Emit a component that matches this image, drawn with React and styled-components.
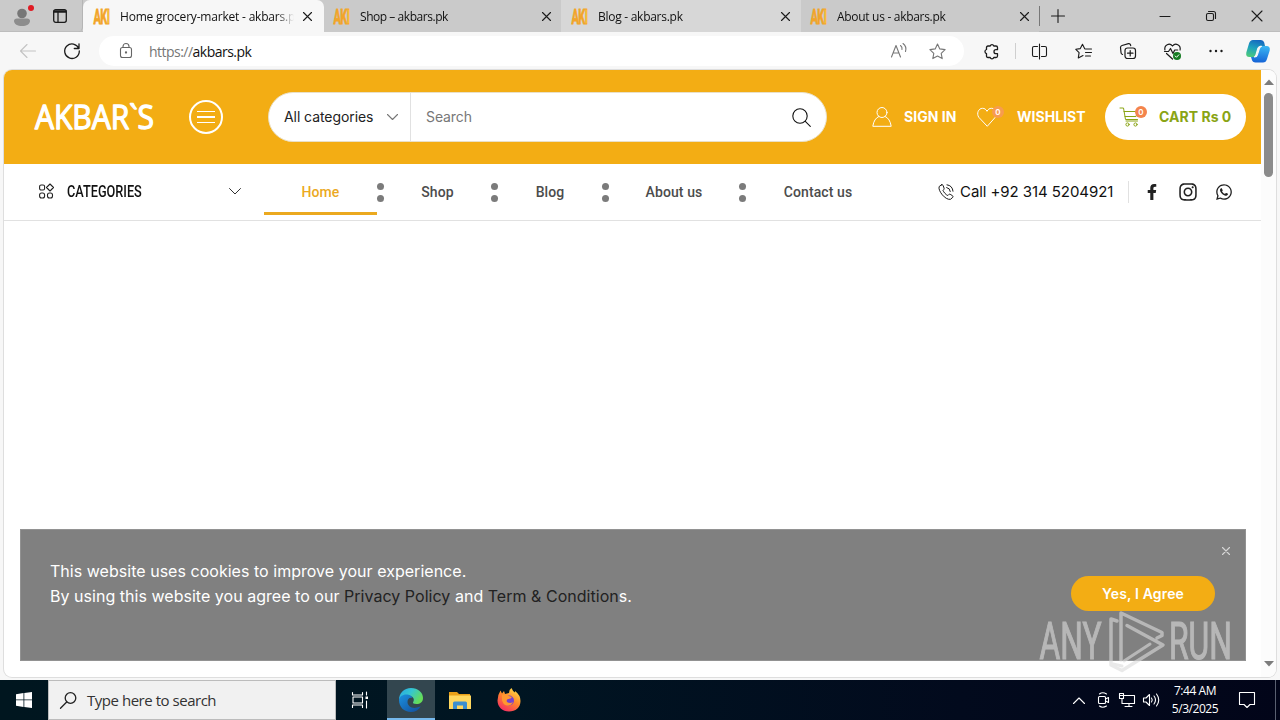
import styled, { createGlobalStyle } from "styled-components";
import { FaFacebookF, FaInstagram, FaWhatsapp } from "react-icons/fa";

const GlobalStyle = createGlobalStyle`
  * {
    box-sizing: border-box;
  }

  body {
    margin: 0;
    overflow: hidden;
    font-family: "Inter", sans-serif;
  }
`;

const Desktop = styled.div`
  position: relative;
  display: flex;
  flex-direction: column;
  width: 1280px;
  height: 720px;
  background: #f7f7f7;
`;

const Icon = styled.svg`
  display: block;
  flex: none;
  width: ${(p) => p.$w || 16}px;
  height: ${(p) => p.$h || p.$w || 16}px;
  margin-left: ${(p) => p.$ml || 0}px;
  fill: none;
  stroke: ${(p) => p.$color || "#1b1b1b"};
  stroke-width: ${(p) => p.$sw || 1.1};
  stroke-linecap: round;
  stroke-linejoin: round;
  overflow: visible;
`;

/* browser tabs */

const TabStrip = styled.div`
  display: flex;
  flex: none;
  height: 32px;
  background: #cacaca;
  box-shadow: inset 0 -1px 0 #bdbdbd;
`;

const TabActions = styled.div`
  display: flex;
  align-items: center;
  width: 83px;
  border-right: 1px solid #b5b5b5;
  border-radius: 0 0 5px 0;
`;

const Tab = styled.div`
  display: flex;
  align-items: center;
  width: ${(p) => p.$width}px;
  padding: 0 ${(p) => p.$end || 10}px 0 ${(p) => p.$pad}px;
  border-radius: ${(p) => (p.$active ? "7px 7px 0 0" : "0")};
  background: ${(p) => p.$bg};
`;

const Favicon = styled.svg`
  display: block;
  flex: none;
  width: 18px;
  height: 18px;
  overflow: visible;
`;

const TabTitle = styled.div`
  width: 174px;
  margin-left: 9px;
  overflow: hidden;
  white-space: nowrap;
  font: 12px "Open Sans", sans-serif;
  letter-spacing: ${(p) => p.$ls || 0}px;
  color: #111;
  mask-image: linear-gradient(to right, #000 90%, transparent);
`;

const TabClose = styled(Icon)`
  margin-left: auto;
`;

const WindowButtons = styled.div`
  display: flex;
  align-items: center;
  flex: 1;
`;

const TabDivider = styled.div`
  width: 1px;
  height: 20px;
  background: #777;
`;

/* address bar */

const Toolbar = styled.div`
  display: flex;
  align-items: center;
  flex: none;
  height: 38px;
  background: #f7f7f7;
`;

const AddressBar = styled.div`
  display: flex;
  align-items: center;
  width: 865px;
  height: 30px;
  margin-left: 19px;
  border-radius: 15px;
  background: #fff;
`;

const Url = styled.div`
  width: 119px;
  margin-left: 17px;
  font: 14px "Open Sans", sans-serif;
  letter-spacing: -0.52px;
  white-space: nowrap;
  color: #111;

  span {
    color: #767676;
  }
`;

const ToolDivider = styled.div`
  width: 1px;
  height: 16px;
  margin-left: 16px;
  background: #cfcfcf;
`;

/* page */

const Viewport = styled.div`
  display: flex;
  flex: none;
  width: 1272px;
  height: 607px;
  margin-left: 4px;
  border-radius: 8px;
  overflow: hidden;
  background: #fff;
  box-shadow: 0 0 0 1px #dedede;
`;

const Page = styled.div`
  display: flex;
  flex-direction: column;
  width: 1257px;
`;

const Scrollbar = styled.div`
  display: flex;
  flex-direction: column;
  align-items: center;
  width: 15px;
  padding: 9px 0 10px;
  background: #fcfcfc;
`;

const Thumb = styled.div`
  width: 9px;
  height: 84px;
  margin: 8px 0 auto;
  border-radius: 5px;
  background: #8b8b8b;
`;

const Header = styled.header`
  display: flex;
  align-items: center;
  flex: none;
  height: 94px;
  padding-left: 30px;
  background: #f3ad14;
`;

const MenuButton = styled.button`
  display: flex;
  flex-direction: column;
  align-items: center;
  justify-content: center;
  gap: 4px;
  width: 34px;
  height: 34px;
  margin-left: 34px;
  padding: 0;
  border: 2px solid #fff;
  border-radius: 50%;
  background: none;

  span {
    width: 18px;
    height: 1.4px;
    background: #fff;
  }
`;

const SearchBox = styled.div`
  display: flex;
  align-items: center;
  width: 559px;
  height: 50px;
  margin-left: 45px;
  border: 1px solid #e9e0c8;
  border-radius: 25px;
  background: #fff;
`;

const CategorySelect = styled.div`
  display: flex;
  align-items: center;
  justify-content: space-between;
  width: 142px;
  height: 48px;
  padding: 0 12px 1px 15px;
  border-right: 1px solid #e1e1e1;
  font-size: 14px;
  letter-spacing: -0.07px;
  color: #222;
  white-space: nowrap;
`;

const SearchField = styled.div`
  width: 367px;
  padding: 0 0 1px 15px;
  font-size: 14px;
  letter-spacing: -0.1px;
  color: #777;
`;

const HeaderLink = styled.div`
  display: flex;
  align-items: center;
  flex: none;
  width: ${(p) => p.$width}px;
  height: 46px;
  margin-left: ${(p) => p.$ml || 0}px;
  padding-bottom: 1px;
  font-size: 14px;
  font-weight: 700;
  letter-spacing: 0.03px;
  color: #fff;
  white-space: nowrap;
`;

const IconBox = styled.div`
  position: relative;
  flex: none;
  width: ${(p) => p.$width}px;
`;

const Badge = styled.span`
  position: absolute;
  top: -1px;
  left: 15px;
  width: 12px;
  height: 12px;
  border-radius: 50%;
  background: ${(p) => p.$bg};
  font-size: 8px;
  font-weight: 600;
  line-height: 12px;
  text-align: center;
  color: #fff;
`;

const CartButton = styled(HeaderLink)`
  padding-left: 15px;
  border-radius: 23px;
  background: #fff;
  color: #8aa414;
`;

const NavBar = styled.nav`
  display: flex;
  align-items: center;
  flex: none;
  height: 57px;
  border-bottom: 1px solid #e1e1e1;
  font-family: "Roboto", sans-serif;
`;

const Categories = styled.div`
  display: flex;
  align-items: center;
  width: 260px;
  padding: 0 23px 1px 35px;
  color: #111;
`;

const CategoriesLabel = styled.div`
  width: 162px;
  margin-left: 13px;
  font-size: 16px;
  font-weight: 500;
  transform: scaleX(0.795);
  transform-origin: left;
`;

const NavItem = styled.div`
  display: flex;
  align-items: center;
  justify-content: center;
  width: ${(p) => p.$width}px;
  height: 46px;
  margin-top: -1px;
  border-top: 3px solid transparent;
  border-bottom: 3px solid ${(p) => (p.$active ? "#eba91f" : "transparent")};
  font-size: 14px;
  font-weight: 500;
  letter-spacing: 0.1px;
  white-space: nowrap;
  color: ${(p) => (p.$active ? "#eba91f" : "#4c4c4c")};
`;

const Dots = styled.div`
  display: flex;
  flex-direction: column;
  gap: 5px;
  width: 7px;

  &::before,
  &::after {
    content: "";
    width: 7px;
    height: 7px;
    border-radius: 50%;
    background: #7b7b7b;
  }
`;

const Phone = styled.div`
  display: flex;
  align-items: center;
  width: 191px;
  height: 22px;
  margin-left: 48px;
  padding-bottom: 1px;
  border-right: 1px solid #e1e1e1;
  font: 15px "Inter", sans-serif;
  letter-spacing: -0.07px;
  white-space: nowrap;
  color: #111;

  span {
    margin-left: 6px;
  }
`;

const Socials = styled.div`
  display: flex;
  align-items: center;
  margin-left: 14px;
  color: #222;

  svg {
    width: 18px;
    margin-right: 18px;
  }
`;

const CookieBar = styled.div`
  display: flex;
  flex: none;
  width: 1226px;
  height: 132px;
  margin: auto 0 16px 16px;
  padding: 29px 15px 0 29px;
  border: 1px solid #929292;
  background: #808080;
  color: #fff;
`;

const CookieText = styled.p`
  width: 1021px;
  margin: 0;
  font-size: 16px;
  line-height: 25px;
  letter-spacing: 0.03px;

  a {
    color: #222;
  }
`;

const CookieActions = styled.div`
  display: flex;
  flex-direction: column;
  width: 159px;
  margin-top: -12px;
`;

const CookieClose = styled(Icon)`
  align-self: flex-end;
`;

const AgreeButton = styled.button`
  width: 144px;
  height: 35px;
  margin-top: 21px;
  padding: 0 0 1px;
  border: 0;
  border-radius: 18px;
  background: #f3ad14;
  font: 600 14px "Inter", sans-serif;
  letter-spacing: 0.15px;
  color: #fff;
`;

const Watermark = styled.svg`
  position: absolute;
  left: 1036px;
  top: 608px;
  width: 200px;
  height: 68px;
  opacity: 0.6;
`;

/* taskbar */

const Taskbar = styled.div`
  display: flex;
  align-items: center;
  flex: none;
  height: 40px;
  margin-top: 3px;
  background: linear-gradient(to right, #00161f, #001522 40%, #020a1d 75%, #020519);
`;

const TaskSearch = styled.div`
  display: flex;
  align-items: center;
  width: 288px;
  height: 40px;
  padding-left: 11px;
  border: 1px solid #bcbcbc;
  background: #f1f1f1;
  font: 15px "Open Sans", sans-serif;
  letter-spacing: -0.47px;
  color: #333;

  span {
    margin-left: 10px;
  }
`;

const TaskButton = styled.div`
  display: flex;
  align-items: center;
  justify-content: center;
  width: ${(p) => p.$width || 49}px;
  height: 40px;
  background: ${(p) => (p.$active ? "#33464f" : "none")};
  box-shadow: ${(p) => (p.$active ? "inset 0 -2px 0 #76b9ed" : "none")};
`;

const Tray = styled.div`
  display: flex;
  align-items: center;
  width: 208px;
  height: 40px;
  margin-left: auto;
  border-right: 1px solid #5a6070;
  margin-right: 4px;
`;

const Clock = styled.div`
  width: 60px;
  margin-left: 5px;
  font: 12px/18px "Open Sans", sans-serif;
  letter-spacing: -0.45px;
  text-align: center;
  white-space: nowrap;
  color: #fff;
`;

const tabs = [
  { title: "Home grocery-market - akbars.pk", width: 241, pad: 10, end: 12, bg: "#f7f7f7", active: true, ls: -0.2 },
  { title: "Shop – akbars.pk", width: 237, pad: 9, bg: "#cacaca", ls: -0.45 },
  { title: "Blog - akbars.pk", width: 240, pad: 10, end: 11, bg: "#d7d7d7", ls: -0.27 },
  { title: "About us - akbars.pk", width: 238, pad: 9, bg: "#cacaca", ls: -0.3 },
];

const navItems = [
  { label: "Home", width: 113, active: true },
  { label: "Shop", width: 107 },
  { label: "Blog", width: 104 },
  { label: "About us", width: 130 },
  { label: "Contact us", width: 144 },
];

function AkbarsFavicon() {
  return (
    <Favicon viewBox="0 0 18 18">
      <g transform="translate(0.5 16.5) scale(0.53 1)" fontFamily="Roboto" fontSize="21" fontWeight="700">
        <text letterSpacing="-1.2" fill="#f2a52a" stroke="#f2a52a" strokeWidth=".8">
          AK<tspan fill="#f6c42e">I</tspan>
        </text>
      </g>
    </Favicon>
  );
}

function BrowserTabs() {
  return (
    <TabStrip>
      <TabActions>
        <Icon $w={24} $ml={10} viewBox="0 0 24 24">
          <circle cx="12" cy="9.500" r="4.800" fill="#777" stroke="none" />
          <path d="M4 17q0-2.500 3-2.500h10q3 0 3 2.500c0 3-3.500 5-8 5s-8-2-8-5z" fill="#8d8d8d" stroke="none" />
          <circle cx="21" cy="4" r="3" fill="#e01b24" stroke="none" />
        </Icon>
        <Icon $w={14} $ml={19} $sw={1.3} viewBox="0 0 14 14">
          <rect x=".7" y=".7" width="12.600" height="12.600" rx="2" />
          <path d="M.7 3h12.600M1 2h12M5 3v10" />
        </Icon>
      </TabActions>
      {tabs.map((tab) => (
        <Tab key={tab.title} $width={tab.width} $pad={tab.pad} $end={tab.end} $bg={tab.bg} $active={tab.active}>
          <AkbarsFavicon />
          <TabTitle $ls={tab.ls}>{tab.title}</TabTitle>
          <TabClose $w={9} viewBox="0 0 9 9">
            <path d="M.5.5l8 8M8.500.5l-8 8" />
          </TabClose>
        </Tab>
      ))}
      <WindowButtons>
        <TabDivider />
        <Icon $w={14} $ml={11} viewBox="0 0 14 14">
          <path d="M7 .5v13M.5 7h13" />
        </Icon>
        <Icon $w={10} $ml={95} viewBox="0 0 10 10">
          <path d="M0 5.500h10" />
        </Icon>
        <Icon $w={10} $ml={36} viewBox="0 0 10 10">
          <rect x=".5" y="2.500" width="7" height="7" rx="1.500" />
          <path d="M2.500.5h5q2 0 2 2v5" />
        </Icon>
        <Icon $w={10} $ml={36} viewBox="0 0 10 10">
          <path d="M0 0l10 10M10 0L0 10" />
        </Icon>
      </WindowButtons>
    </TabStrip>
  );
}

function AddressToolbar() {
  return (
    <Toolbar>
      <Icon $w={16} $ml={20} $color="#c3c3c3" viewBox="0 0 16 16">
        <path d="M15.500 8H.8M7 1.500L.5 8 7 14.500" />
      </Icon>
      <Icon $w={16} $ml={28} $sw={1.3} viewBox="0 0 16 16">
        <path d="M14.800 5.500A7.300 7.300 0 1 0 15.300 8M15 .8v4.700h-4.700" />
      </Icon>
      <AddressBar>
        <Icon $w={12} $h={16} $ml={21} $color="#666" viewBox="0 0 12 16">
          <rect x=".5" y="4.500" width="11" height="10" rx="2" />
          <path d="M3 4.500V3.500a3 3 0 0 1 6 0v1" />
          <circle cx="6" cy="9.500" r=".6" fill="#666" />
        </Icon>
        <Url>
          <span>https://</span>akbars.pk
        </Url>
        <Icon $w={16} $ml={623} $color="#777" viewBox="0 0 16 16">
          <path d="M.5 14L5 2.500 9.500 14M2 10h6M9.500 2.500q2 1.500 1.500 4M12 .5q4 3 2.500 8" />
        </Icon>
        <Icon $w={17} $ml={22} $color="#777" viewBox="0 0 17 17">
          <path d="M8.500 1l2.300 4.900 5.300.7-3.900 3.700 1 5.300-4.700-2.600-4.700 2.600 1-5.300L.9 6.600l5.300-.7z" />
        </Icon>
      </AddressBar>
      <Icon $w={15} $ml={20} $sw={1.3} viewBox="0 0 15 15">
        <path d="M4 2h2.200a1.900 1.900 0 0 1 3.600 0H12q1.500 0 1.500 1.500v2.200H12a2 2 0 0 0 0 4h1.500v2.300q0 1.500-1.500 1.500H9.800a1.900 1.900 0 0 1-3.600 0H4Q2.500 13.500 2.500 12V9.700a2.200 2.200 0 0 1 0-4.200v-2Q2.500 2 4 2z" />
      </Icon>
      <ToolDivider />
      <Icon $w={15} $ml={16} viewBox="0 0 15 15">
        <path d="M5.500 2.500H2q-1.500 0-1.500 1.500v7q0 1.500 1.500 1.500h3.500M9.500 2.500H13q1.500 0 1.500 1.500v7q0 1.500-1.500 1.500H9.500M7.500 0v15" />
      </Icon>
      <Icon $w={17} $ml={28} viewBox="0 0 17 17">
        <path d="M10.500 6L9.700 5.700 7.500 1.300 5.300 5.600.8 6.300l3.300 3.300-.8 5.300L8 12.500M10.500 6h6M10.500 9.500h6M10.500 13h5" />
      </Icon>
      <Icon $w={16} $ml={28} $sw={1.2} viewBox="0 0 16 16">
        <rect x="5" y="5" width="10.500" height="10.500" rx="2.500" />
        <path d="M10.200 7.500v5.500M7.500 10.200H13M2.500 11.500Q1 11 1 9.500L.5 4.500q0-1.500 1.500-2L8.500.6q1.500-.3 2 1.200l.2.8" />
      </Icon>
      <Icon $w={17} $ml={28} $sw={1.2} viewBox="0 0 17 17">
        <path d="M.9 7C0 2 5.500-.8 8.500 3c3-3.800 8.500-1 7.600 4M2.500 10.500l6 5.500M.5 8.500h4l2-3 2.500 5 1.700-3.500h3" />
        <circle cx="13" cy="13" r="4" fill="#157c22" stroke="none" />
        <path d="M11.200 13l1.300 1.300 2.300-2.500" stroke="#fff" strokeWidth="1" />
      </Icon>
      <Icon $w={14} $h={4} $ml={28} viewBox="0 0 14 4">
        <circle cx="1.500" cy="2" r="1.200" fill="#1b1b1b" stroke="none" />
        <circle cx="7" cy="2" r="1.200" fill="#1b1b1b" stroke="none" />
        <circle cx="12.500" cy="2" r="1.200" fill="#1b1b1b" stroke="none" />
      </Icon>
      <Icon $w={24} $h={23} $ml={23} viewBox="0 0 24 23">
        <defs>
          <linearGradient id="copilotLeft" x1=".6" y1="0" x2=".3" y2="1">
            <stop offset="0" stopColor="#1668c0" />
            <stop offset=".5" stopColor="#1fa3bd" />
            <stop offset="1" stopColor="#4cc97c" />
          </linearGradient>
          <linearGradient id="copilotRight" x1=".5" y1="0" x2=".4" y2="1">
            <stop offset="0" stopColor="#39b6f3" />
            <stop offset="1" stopColor="#1563d6" />
          </linearGradient>
        </defs>
        <g stroke="none">
          <path d="M7 0h8q2.500 0 3.200 2.500L19 6h-3.500q-2.500 0-3.200 2.500l-2 6.500q-.8 2-3 2H3.500Q-.5 17 .3 12.500L3 3.500Q4 0 7 0z" fill="url(#copilotLeft)" />
          <path d="M17 22.500H9.500q-3 0-3.700-3L5 17h2.500q2.500 0 3.200-2.500l2-6.500q.8-2 3-2h4.800q4 0 3.200 4.500L21 19q-1 3.500-4 3.500z" fill="url(#copilotRight)" />
          <path d="M11.800 8.500q.6-1.800 2.600-2.300h1.200q-1.600.5-2.200 2.300l-2 6.300Q10.800 17 8.500 17q1.200-.8 1.600-2.500z" fill="#f7f7f7" stroke="#f7f7f7" />
        </g>
      </Icon>
    </Toolbar>
  );
}

function ShopHeader() {
  return (
    <Header>
      <Icon $w={121} $h={30} viewBox="0 0 121 30">
        <text
          x="1"
          y="26.500"
          textLength="119"
          lengthAdjust="spacingAndGlyphs"
          fontFamily="Open Sans"
          fontSize="32"
          fill="#fff"
          stroke="#fff"
          strokeWidth="1.300"
        >
          AKBAR`S
        </text>
      </Icon>
      <MenuButton>
        <span />
        <span />
        <span />
      </MenuButton>
      <SearchBox>
        <CategorySelect>
          All categories
          <Icon $w={11} $h={6} $color="#777" viewBox="0 0 11 6">
            <path d="M.5.5l5 5 5-5" />
          </Icon>
        </CategorySelect>
        <SearchField>Search</SearchField>
        <Icon $w={19} $ml={14} $color="#111" viewBox="0 0 19 19">
          <circle cx="8" cy="8" r="7.200" />
          <path d="M13.300 13.300l5 5" />
        </Icon>
      </SearchBox>
      <Icon $w={20} $ml={45} $color="#fff" $sw={1} viewBox="0 0 20 20">
        <circle cx="10" cy="5.500" r="5" />
        <path d="M6.800 9.500Q2 11.500 .8 19.300h18.400Q18 11.500 13.200 9.500" />
      </Icon>
      <HeaderLink $width={73} $ml={12}>
        SIGN IN
      </HeaderLink>
      <HeaderLink $width={128}>
        <IconBox $width={40}>
          <Icon $w={20} $color="#fff" $sw={1} viewBox="0 0 20 20">
            <path d="M10 19L1.800 10.300C-.8 6.500 1.500 1.300 5.500 1.300c2 0 3.500 1 4.500 3 1-2 2.500-3 4.500-3 4 0 6.300 5.200 3.700 9z" />
          </Icon>
          <Badge $bg="#f79c4f">0</Badge>
        </IconBox>
        WISHLIST
      </HeaderLink>
      <CartButton $width={141}>
        <IconBox $width={39}>
          <Icon $w={19} $h={20} $color="#8aa414" $sw={1} viewBox="0 0 19 20">
            <path d="M0 1h3.500l2 11.500h12M4 4.500h13M5 9.500h11l1.500-5M6 14h11.500" />
            <circle cx="7.500" cy="17.500" r="1.600" />
            <circle cx="15.500" cy="17.500" r="1.600" />
          </Icon>
          <Badge $bg="#f4844c">0</Badge>
        </IconBox>
        CART Rs 0
      </CartButton>
    </Header>
  );
}

function ShopNav() {
  return (
    <NavBar>
      <Categories>
        <Icon $w={15} $color="#222" viewBox="0 0 15 15">
          <rect x=".6" y="1" width="5" height="5" rx="1.500" />
          <path d="M11 0l3.500 3.500L11 7 7.500 3.500z" />
          <rect x=".6" y="9" width="5" height="5" rx="2" />
          <rect x="8.500" y="9" width="5" height="5" rx="2" />
        </Icon>
        <CategoriesLabel>CATEGORIES</CategoriesLabel>
        <Icon $w={12} $h={7} $sw={0.9} viewBox="0 0 12 7">
          <path d="M.5.5L6 6 11.500.5" />
        </Icon>
      </Categories>
      {navItems.map((item, idx) => [
        idx > 0 && <Dots key={idx} />,
        <NavItem key={item.label} $width={item.width} $active={item.active}>
          {item.label}
        </NavItem>,
      ])}
      <Phone>
        <Icon $w={16} $sw={1} viewBox="0 0 16 16">
          <path d="M3.500.8L1.200 2.500C-.5 6.500 7.500 16.500 12.500 15.300l2.300-2q.5-1-.3-1.600l-2.300-1.400q-.8-.4-1.500.3l-.9.9C8 11 5.500 8 5 6.300l.8-.8q.6-.7.2-1.500L5 1.200Q4.500.3 3.500.8zM9 .8q5.500.7 6 6.400M8.700 3.500Q12 4 12.300 7.500" />
        </Icon>
        <span>Call +92 314 5204921</span>
      </Phone>
      <Socials>
        <FaFacebookF size={16} />
        <FaInstagram size={20} />
        <FaWhatsapp size={18} />
      </Socials>
    </NavBar>
  );
}

function CookieNotice() {
  return (
    <CookieBar>
      <CookieText>
        This website uses cookies to improve your experience.
        <br />
        By using this website you agree to our <a>Privacy Policy</a> and <a>Term &amp; Condition</a>s.
      </CookieText>
      <CookieActions>
        <CookieClose $w={8} $color="#d5d5d5" viewBox="0 0 8 8">
          <path d="M.5.5l7 7M7.500.5l-7 7" />
        </CookieClose>
        <AgreeButton>Yes, I Agree</AgreeButton>
      </CookieActions>
    </CookieBar>
  );
}

function WindowsTaskbar() {
  return (
    <Taskbar>
      <TaskButton $width={48}>
        <Icon $w={16} viewBox="0 0 16 16">
          <path d="M0 2.200L7.500 1v6.500H0zM8.300.9L16 0v7.500H8.300zM0 8.300h7.500V15L0 13.800zM8.300 8.300H16V16l-7.700-1z" fill="#fff" stroke="none" />
        </Icon>
      </TaskButton>
      <TaskSearch>
        <Icon $w={17} $sw={1.3} $color="#222" viewBox="0 0 17 17">
          <circle cx="10.500" cy="6" r="5.300" />
          <path d="M6.700 10L.5 16.300" />
        </Icon>
        <span>Type here to search</span>
      </TaskSearch>
      <TaskButton $width={51}>
        <Icon $w={16} $color="#fff" $ml={-3} viewBox="0 0 16 16">
          <path d="M.5.5V3h10V.5M.5 15.500V13h10v2.500M1 5h9.500v6H1zM14.500 0v3M14.500 9v7" />
          <path d="M13.500 4.500h2.500v2.500h-2.500z" fill="#fff" stroke="none" />
        </Icon>
      </TaskButton>
      <TaskButton $width={48} $active>
        <Icon $w={24} viewBox="0 0 24 24">
          <defs>
            <linearGradient id="edgeTop" x1="0" y1="0" x2="1" y2=".5">
              <stop offset="0" stopColor="#27a5e5" />
              <stop offset=".5" stopColor="#35c6d1" />
              <stop offset="1" stopColor="#65dd58" />
            </linearGradient>
            <linearGradient id="edgeSide" x1="0" y1="0" x2="1" y2="1">
              <stop offset="0" stopColor="#1b91e0" />
              <stop offset="1" stopColor="#134d9b" />
            </linearGradient>
          </defs>
          <g stroke="none">
            <path d="M0 12C0 5 5 0 12 0s12 4.500 12 10c0 4-3 6-6.500 6-3 0-4-1-3.300-2 1.800-3-.2-6-4.200-6S0 10 0 12z" fill="url(#edgeTop)" />
            <path d="M0 12c0-3.500 4-6 8.500-5.500 3 .3 4.500 2 5 3.500-3-1-5 1-5 4 0 4 4.500 7 9.500 5.500 1.500-.4 3.500-1.700 3.500-.7C19.500 22.300 16 24 12 24 5 24 0 19 0 12z" fill="url(#edgeSide)" />
          </g>
        </Icon>
      </TaskButton>
      <TaskButton>
        <Icon $w={22} $h={19} viewBox="0 0 22 19">
          <g stroke="none">
            <path d="M0 1h8l2 2h11v5H0z" fill="#e9a018" />
            <path d="M0 4.500h22V18H0z" fill="#ffd75e" />
            <path d="M4 18v-6q0-1.500 1.500-1.500h11q1.500 0 1.500 1.500v6h-4v-3.500H8V18z" fill="#3c8fcf" />
          </g>
        </Icon>
      </TaskButton>
      <TaskButton>
        <Icon $w={24} viewBox="0 0 24 24">
          <defs>
            <linearGradient id="fox" x1=".8" y1="0" x2=".2" y2="1">
              <stop offset="0" stopColor="#ffe14a" />
              <stop offset=".45" stopColor="#ff8a2a" />
              <stop offset="1" stopColor="#f52667" />
            </linearGradient>
          </defs>
          <g stroke="none">
            <path d="M3.500 2.500L5 5.500l2-2.500 1 3 4-1q0-3.500 2.500-5 1 3 3.500 4.500V3q5.500 4 5.500 10c0 6.500-5 10.500-11.500 10.500S.5 19 .5 12.500q0-5.500 3-10z" fill="url(#fox)" />
            <circle cx="12" cy="12.500" r="5" fill="#7542cf" />
            <path d="M5 7q4-2 7 1l3 1q-1 2-4 2-2 1-1 3 3 2 6 0-2 4-6 3.500T5 12z" fill="#ff9830" />
          </g>
        </Icon>
      </TaskButton>
      <Tray>
        <Icon $w={12} $h={7} $ml={5} $color="#fff" viewBox="0 0 12 7">
          <path d="M.5 6.500L6 1l5.500 5.500" />
        </Icon>
        <Icon $w={11} $h={16} $ml={13} $color="#fff" viewBox="0 0 11 16">
          <rect x=".5" y="4.500" width="7" height="7" rx="1" />
          <path d="M7.500 7l3-1.500v5l-3-1.500M1.500 2q3-2.500 7 0M1.500 14q3 2.500 7 0" />
        </Icon>
        <Icon $w={16} $h={14} $ml={10} $color="#fff" viewBox="0 0 16 14">
          <path d="M5 2.500h10.500v8H3V6M10 10.500v3M6 13.500h7M.5.5h4v5h-4zM.5 2.500h4" />
        </Icon>
        <Icon $w={17} $h={14} $ml={8} $color="#fff" viewBox="0 0 17 14">
          <path d="M.5 5v4H3l3.500 3.500v-11L3 5zM8.500 5q1.500 2 0 4M11 3q3 4 0 8M13.500 1q4.500 6 0 12" />
        </Icon>
        <Clock>
          7:44 AM
          <br />
          5/3/2025
        </Clock>
        <Icon $w={16} $ml={14} $color="#fff" viewBox="0 0 16 16">
          <path d="M.5.5h15v12H11L8 15.500l-3-3H.5z" />
        </Icon>
      </Tray>
    </Taskbar>
  );
}

function AnyRunMark() {
  return (
    <Watermark viewBox="0 0 200 68">
      <g fontFamily="Roboto" fontSize="51" fill="#dcdcdc" stroke="#dcdcdc" strokeWidth="1.200">
        <text x="3.500" y="51" textLength="62" lengthAdjust="spacingAndGlyphs">
          ANY
        </text>
        <text x="133" y="51" textLength="63" lengthAdjust="spacingAndGlyphs">
          RUN
        </text>
      </g>
      <g fill="none" stroke="#dcdcdc" strokeWidth="3.500" strokeLinejoin="round" strokeLinecap="round">
        <path d="M85 52V5L126 24.500v3L121 30M91 17.500L127 37 86 62.500 75 57V11l6 2" />
        <path d="M88 53l26-17M77 56l9 2" strokeWidth="3" />
      </g>
    </Watermark>
  );
}

export default function App() {
  return (
    <>
      <GlobalStyle />
      <Desktop>
        <BrowserTabs />
        <AddressToolbar />
        <Viewport>
          <Page>
            <ShopHeader />
            <ShopNav />
            <CookieNotice />
          </Page>
          <Scrollbar>
            <Icon $w={10} $h={6} viewBox="0 0 10 6">
              <path d="M0 6l5-5.500L10 6z" fill="#7c7c7c" stroke="none" />
            </Icon>
            <Thumb />
            <Icon $w={10} $h={6} viewBox="0 0 10 6">
              <path d="M0 0l5 5.500L10 0z" fill="#7c7c7c" stroke="none" />
            </Icon>
          </Scrollbar>
        </Viewport>
        <WindowsTaskbar />
        <AnyRunMark />
      </Desktop>
    </>
  );
}
